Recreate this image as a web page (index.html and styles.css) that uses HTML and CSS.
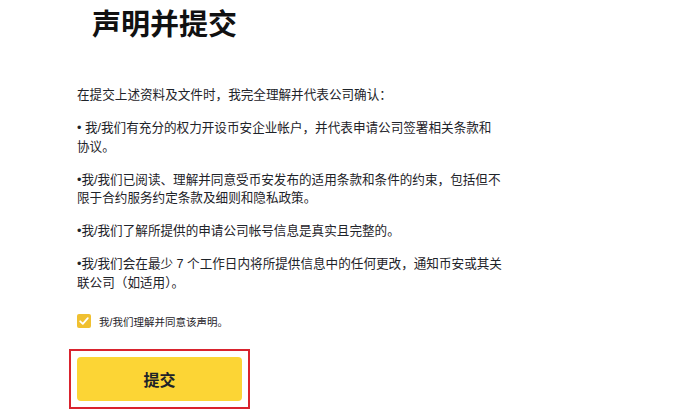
FILE: index.html
```html
<!DOCTYPE html>
<html lang="zh-CN">
<head>
<meta charset="utf-8">
<link rel="stylesheet" href="styles.css">
</head>
<body>
<div class="page">
  <h1 class="title">声明并提交</h1>
  <div class="content">
    <p class="para">在提交上述资料及文件时，我完全理解并代表公司确认：</p>
    <p class="para">• 我/我们有充分的权力开设币安企业帐户，并代表申请公司签署相关条款和<span class="nw">协议。</span></p>
    <p class="para">•我/我们已阅读、理解并同意受币安发布的适用条款和条件的约束，包括但不限于合约服务约定条款及细则和隐私政策。</p>
    <p class="para">•我/我们了解所提供的申请公司帐号信息是真实且完整的。</p>
    <p class="para">•我/我们会在最少 7 个工作日内将所提供信息中的任何更改，通知币安或其关联公司（如适用）。</p>
    <label class="agree">
      <span class="check"><svg viewBox="0 0 14 14" width="14" height="14"><path d="M3.2 7.3 L5.8 9.8 L10.8 4.2" fill="none" stroke="#fff" stroke-width="1.8" stroke-linecap="round" stroke-linejoin="round"/></svg></span>
      <span class="agree-text">我/我们理解并同意该声明。</span>
    </label>
    <div class="highlight">
      <button class="submit">提交</button>
    </div>
  </div>
</div>
</body>
</html>
```

FILE: styles.css
```css
html, body {
  margin: 0;
  padding: 0;
  background: #ffffff;
}
body {
  font-family: "Liberation Sans", "Noto Sans CJK SC", sans-serif;
  color: #1e2329;
}
.page {
  padding: 5px 0 0 77px;
}
.title {
  margin: 0 0 0 15px;
  font-family: "Noto Sans CJK SC", sans-serif;
  font-size: 29px;
  line-height: 35px;
  font-weight: 700;
  color: #111111;
}
.content {
  width: 429px;
  margin-top: 46px;
}
.para {
  margin: 0 0 14.5px 0;
  font-size: 12.6px;
  line-height: 18.5px;
  color: #1e2329;
}
.nw {
  white-space: nowrap;
}
.agree {
  display: flex;
  align-items: center;
  gap: 8px;
  margin-top: 22px;
  height: 14px;
}
.check {
  width: 14px;
  height: 14px;
  border-radius: 2px;
  background: #f0c030;
  display: flex;
}
.agree-text {
  font-size: 10.5px;
  color: #1e2329;
}
.highlight {
  margin: 21px 0 0 -8px;
  width: 165px;
  padding: 6px;
  border: 2px solid #d9232e;
}
.submit {
  display: block;
  width: 165px;
  height: 44px;
  border: none;
  border-radius: 4px;
  background: #fcd535;
  font-family: "Noto Sans CJK SC", sans-serif;
  font-size: 16px;
  font-weight: 700;
  color: #1e2329;
  padding: 0;
}
```
